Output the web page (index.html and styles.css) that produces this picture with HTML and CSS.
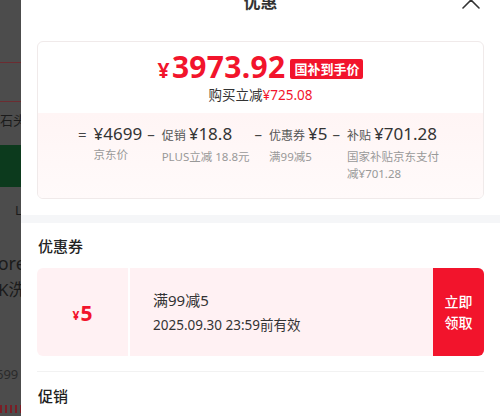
FILE: index.html
```html
<!DOCTYPE html>
<html lang="zh-CN">
<head>
  <meta charset="UTF-8" />
  <title>优惠</title>
  <link rel="stylesheet" href="styles.css">
</head>
<body>
  <div class="backdrop">
    <div class="bd-line bd-line-1"></div>
    <div class="bd-line bd-line-2"></div>
    <div class="bd-text bd-shop">石头</div>
    <div class="bd-green"></div>
    <div class="bd-text bd-l">L</div>
    <div class="bd-text bd-name">Bore</div>
    <div class="bd-text bd-name2">K洗</div>
    <div class="bd-text bd-price">699</div>
    <div class="bd-red"></div>
  </div>

  <div class="sheet">
    <div class="sheet-head">
      <span class="sheet-title">优惠</span>
      <svg class="close" width="20" height="20" viewBox="0 0 20 20">
        <path d="M2 2 L18 18 M18 2 L2 18" stroke="#333" stroke-width="1.6" fill="none" stroke-linecap="round"/>
      </svg>
    </div>

    <div class="price-card">
      <div class="price-top">
        <div class="price-line">
          <span class="price"><span class="yen">¥</span>3973.92</span>
          <span class="badge">国补到手价</span>
        </div>
        <div class="saving">购买立减<span class="red">¥725.08</span></div>
      </div>
      <div class="price-bottom">
        <div class="calc">
          <div class="calc-item">
            <span class="op">=</span>
            <div class="calc-stack">
              <div class="calc-top"><span class="val">¥4699</span></div>
              <div class="calc-desc">京东价</div>
            </div>
          </div>
          <div class="calc-item">
            <span class="op">–</span>
            <div class="calc-stack">
              <div class="calc-top"><span class="pre">促销</span><span class="val">¥18.8</span></div>
              <div class="calc-desc">PLUS立减 18.8元</div>
            </div>
          </div>
          <div class="calc-item">
            <span class="op">–</span>
            <div class="calc-stack">
              <div class="calc-top"><span class="pre">优惠券</span><span class="val">¥5</span></div>
              <div class="calc-desc">满99减5</div>
            </div>
          </div>
          <div class="calc-item">
            <span class="op">–</span>
            <div class="calc-stack">
              <div class="calc-top"><span class="pre">补贴</span><span class="val">¥701.28</span></div>
              <div class="calc-desc wrap">国家补贴京东支付减¥701.28</div>
            </div>
          </div>
        </div>
      </div>
    </div>

    <div class="band"></div>

    <div class="section">
      <div class="section-title">优惠券</div>
      <div class="coupon">
        <div class="coupon-amount"><span class="c-yen">¥</span>5</div>
        <div class="coupon-info">
          <div class="coupon-rule">满99减5</div>
          <div class="coupon-date">2025.09.30 23:59前有效</div>
        </div>
        <div class="coupon-btn">立即<br>领取</div>
      </div>
    </div>

    <div class="section section-promo">
      <div class="section-title">促销</div>
    </div>
  </div>
</body>
</html>
```

FILE: styles.css
```css
:root {
  --red: #f2142c;
  --text: #222;
  --muted: #999;
  --pink: #fff1f3;
}

body {
  margin: 0;
  height: 416px;
  overflow: hidden;
  display: flex;
  font-family: "Noto Sans", "Noto Sans CJK SC", sans-serif;
  color: var(--text);
  background: #fff;
}

/* dimmed page behind the sheet */
.backdrop {
  width: 21px;
  flex-shrink: 0;
  background: #4c4c4c;
  overflow: hidden;
  display: flex;
  flex-direction: column;
  color: #1b1b1b;
  white-space: nowrap;
}

.bd-line {
  height: 1px;
  background: #6c2c31;
}

.bd-line-1 { margin-top: 62px; }
.bd-line-2 { margin-top: 38px; }

.bd-text {
  font-size: 14px;
  line-height: 18px;
}

.bd-shop { margin-top: 9px; font-size: 13px; }

.bd-green {
  margin-top: 16px;
  height: 42px;
  background: #0c3a1d;
}

.bd-l { margin-top: 14px; padding-left: 15px; font-size: 13px; }

.bd-name { margin-top: 33px; margin-left: -14px; font-size: 18px; line-height: 22px; }
.bd-name2 { margin-top: 5px; margin-left: -2px; font-size: 17px; line-height: 22px; }

.bd-price { margin-top: 64px; margin-left: -4px; font-size: 13px; color: #2a2a2a; }

.bd-red {
  margin-top: 22px;
  height: 8px;
  background: repeating-linear-gradient(90deg, #7a1d25 0 2px, transparent 2px 5px);
}

/* sheet */
.sheet {
  flex: 1;
  background: #fff;
  display: flex;
  flex-direction: column;
  overflow: hidden;
}

.sheet-head {
  margin-top: -20px;
  height: 40px;
  display: flex;
  align-items: center;
  justify-content: center;
  position: relative;
}

.sheet-title {
  font-size: 17px;
  font-weight: 600;
  color: #333;
}

.close {
  position: absolute;
  right: 19px;
  top: 10px;
}

.price-card {
  margin: 21px 16px 0;
  border: 1px solid #f0eaea;
  border-radius: 6px;
  overflow: hidden;
}

.price-top {
  padding-top: 8px;
  height: 63px;
  display: flex;
  flex-direction: column;
  align-items: center;
}

.price-line {
  display: flex;
  align-items: center;
  gap: 5px;
  height: 36px;
  line-height: 36px;
}

.price {
  color: var(--red);
  font-size: 30px;
  font-weight: 700;
  letter-spacing: 0.3px;
}

.yen {
  font-size: 21px;
  margin-right: 2px;
}

.badge {
  background: var(--red);
  color: #fff;
  font-size: 13px;
  font-weight: 700;
  height: 20px;
  line-height: 20px;
  padding: 0 4px;
  border-radius: 2px;
  margin-top: 1px;
}

.saving {
  font-size: 13.5px;
  line-height: 19px;
  color: #333;
}

.red { color: var(--red); }

.price-bottom {
  height: 85px;
  background: linear-gradient(180deg, #fff5f5 0%, #fffafa 100%);
  display: flex;
  justify-content: center;
  padding-top: 9px;
  box-sizing: border-box;
}

.calc {
  display: flex;
  gap: 5px;
}

.calc-item {
  display: flex;
  gap: 7px;
}

.op {
  font-size: 15px;
  line-height: 24px;
  color: #444;
}

.calc-stack {
  display: flex;
  flex-direction: column;
}

.calc-top {
  display: flex;
  align-items: baseline;
  gap: 3px;
  line-height: 24px;
  white-space: nowrap;
}

.pre {
  font-size: 12px;
  color: #555;
}

.val {
  font-size: 17px;
  color: #333;
}

.calc-desc {
  font-size: 11.5px;
  line-height: 17px;
  color: var(--muted);
  white-space: nowrap;
}

.calc-desc.wrap {
  white-space: normal;
  width: 96px;
}

.band {
  margin-top: 16px;
  height: 8px;
  background: #f5f6f8;
}

.section {
  padding: 0 16px;
}

.section-title {
  font-size: 15px;
  font-weight: 500;
  line-height: 20px;
  padding: 13px 1px 0;
  color: #222;
}

.coupon {
  margin-top: 12px;
  height: 88px;
  display: flex;
  gap: 2px;
  padding-bottom: 15px;
  border-bottom: 1px solid #f2f2f2;
}

.coupon-amount {
  width: 91px;
  background: var(--pink);
  border-radius: 6px 0 0 6px;
  display: flex;
  align-items: center;
  justify-content: center;
  color: var(--red);
  font-size: 21px;
  font-weight: 700;
  padding-top: 2px;
}

.c-yen {
  font-size: 12px;
  margin-top: 5px;
  margin-right: 1px;
}

.coupon-info {
  flex: 1;
  background: var(--pink);
  display: flex;
  flex-direction: column;
  justify-content: center;
  padding-left: 23px;
  gap: 5px;
}

.coupon-rule {
  font-size: 15px;
  line-height: 21px;
  color: #333;
}

.coupon-date {
  font-size: 13.5px;
  line-height: 19px;
  color: #333;
}

.coupon-btn {
  width: 51px;
  margin-left: -2px;
  background: var(--red);
  color: #fff;
  border-radius: 0 6px 6px 0;
  display: flex;
  align-items: center;
  justify-content: center;
  text-align: center;
  font-size: 14px;
  line-height: 21px;
  font-weight: 500;
}

.section-promo .section-title {
  padding-top: 14px;
}
```
